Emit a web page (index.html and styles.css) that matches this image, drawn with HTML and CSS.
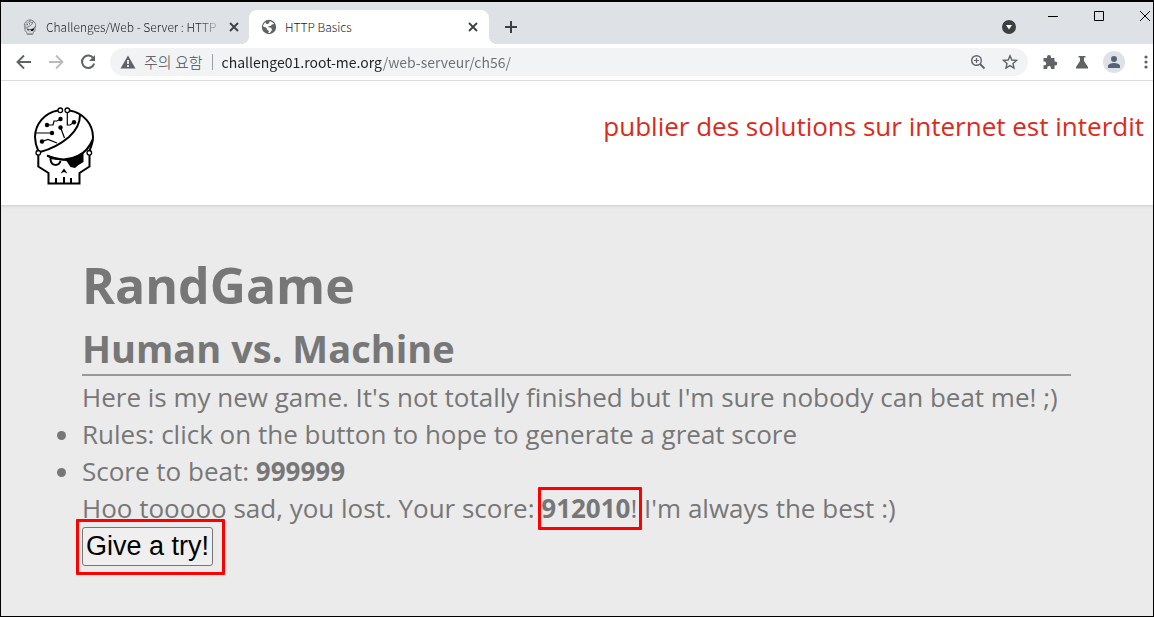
FILE: index.html
```html
<!DOCTYPE html>
<html lang="en">
<head>
<meta charset="utf-8">
<title>HTTP Basics</title>
<link rel="stylesheet" href="styles.css">
</head>
<body>
<svg class="defs" aria-hidden="true">
  <symbol id="skull" viewBox="12 10 64 82">
    <g fill="none" stroke="#000" stroke-width="2">
      <path d="M38 15.5C25 17.500 15 29 15 42C15 48 16.500 52 18.300 56"/>
      <path d="M49.500 15.500C63 17.500 73 29 73 42C73 48 71 52 69.300 56"/>
      <path d="M20 57Q36 53 49 42Q60 32 60 20"/>
      <path d="M27 60.500Q44 68 58 61Q68 56 72.500 45"/>
      <path d="M18.300 60V71.500L28.500 78V88.500H59.500V78L69.500 71.500V60"/>
      <path d="M36 83V88M44 82V88M51 83V88"/>
      <path d="M30.500 64C31 72 39 71 40.500 66"/>
      <circle cx="40.300" cy="15.300" r="2.300" stroke-width="1.300"/>
      <circle cx="47.300" cy="15.300" r="2.300" stroke-width="1.300"/>
      <circle cx="18.300" cy="57.800" r="2.300" stroke-width="1.300"/>
      <circle cx="69.300" cy="57.800" r="2.300" stroke-width="1.300"/>
      <path stroke-width="1.200" d="M27 30H33L34 26H37L40.500 24M47.300 17.500V30H50L54 27.500M40.500 32.500L44.500 43M32 38H16M22 46.500L28 44.500L37 48"/>
    </g>
    <circle cx="27" cy="30" r="2.200"/><circle cx="40.500" cy="24" r="2.200"/><circle cx="54" cy="27.300" r="2.200"/>
    <circle cx="40.500" cy="32.500" r="2.200"/><circle cx="32" cy="38" r="2.200"/><circle cx="22" cy="46.500" r="2.200"/>
    <path d="M27 60L44 65L50 64L63.500 57V67L58.500 70L55 73L50.500 72L46.500 66L30 64Z"/>
    <path d="M40.500 78.500L44 73.500L47.500 78.500L44 77Z"/>
  </symbol>
  <symbol id="close" viewBox="0 0 12 12">
    <path d="M2 2L10 10M10 2L2 10" fill="none" stroke="#3c4043" stroke-width="1.800"/>
  </symbol>
</svg>

<div class="window">
  <div class="tabstrip">
    <div class="tab">
      <svg class="favicon"><use href="#skull"/></svg>
      <span class="tab-title tab-title-faded">Challenges/Web - Server : HTTP</span>
      <button class="icon-button" aria-label="Close tab"><svg width="12" height="12"><use href="#close"/></svg></button>
    </div>
    <div class="tab tab-active">
      <svg class="globe" viewBox="0 0 16 16"><circle cx="8" cy="8" r="7.200" fill="#5f6368"/><path fill="#fff" d="M8.500 2.200C10.500 2.300 12.300 3.600 13 5L11 5.500L9.500 7H7.800L7.200 8.300L9.500 8.600L11 10L10.500 11.800L8.800 14L7.300 14L8 12L6 10.500L5.500 8.700L2.100 7.600C2.200 5.600 3.100 4.100 4.500 3.200L5 4.800L7 5L8.200 4Z"/></svg>
      <span class="tab-title">HTTP Basics</span>
      <button class="icon-button" aria-label="Close tab"><svg width="12" height="12"><use href="#close"/></svg></button>
    </div>
    <button class="icon-button new-tab" aria-label="New tab"><svg width="14" height="14" viewBox="0 0 14 14"><path d="M7 1V13M1 7H13" stroke="#3c4043" stroke-width="2"/></svg></button>
    <div class="window-tools">
      <button class="icon-button tab-search" aria-label="Search tabs"><svg width="14" height="14" viewBox="0 0 14 14"><circle cx="7" cy="7" r="7" fill="#3c4043"/><path d="M4 5H10L7 9.500Z" fill="#fff"/></svg></button>
      <button class="icon-button" aria-label="Minimize"><svg width="10" height="10" viewBox="0 0 10 10"><path d="M0 5.500H10" stroke="#000"/></svg></button>
      <button class="icon-button" aria-label="Maximize"><svg width="10" height="10" viewBox="0 0 10 10"><path d="M.5.5H9.500V9.500H.5Z" fill="none" stroke="#000"/></svg></button>
      <button class="icon-button" aria-label="Close"><svg width="10" height="10" viewBox="0 0 10 10"><path d="M0 0L10 10M10 0L0 10" stroke="#000"/></svg></button>
    </div>
  </div>

  <div class="toolbar">
    <div class="nav">
      <button class="icon-button" aria-label="Back"><svg width="16" height="16" viewBox="0 0 16 16"><path d="M15 8H2M8 1.500L1.500 8L8 14.500" fill="none" stroke="#5f6368" stroke-width="1.900"/></svg></button>
      <button class="icon-button" aria-label="Forward"><svg width="16" height="16" viewBox="0 0 16 16"><path d="M1 8H14M8 1.500L14.500 8L8 14.500" fill="none" stroke="#babcbe" stroke-width="1.900"/></svg></button>
      <button class="icon-button" aria-label="Reload"><svg width="16" height="16" viewBox="0 0 16 16"><path d="M13.500 4.500A6.200 6.200 0 1 0 14.200 9.500" fill="none" stroke="#5f6368" stroke-width="2"/><path d="M15 1V7H9Z" fill="#5f6368"/></svg></button>
    </div>
    <div class="omnibox">
      <svg width="16" height="16" viewBox="0 0 16 16"><path d="M8 1.500L15.500 14.500H.5Z" fill="#5f6368"/><path d="M8 6V10M8 11V13" stroke="#fff" stroke-width="1.600"/></svg>
      <label class="security" for="address">주의 요함</label>
      <input class="address" id="address" type="text" value="challenge01.root-me.org/web-serveur/ch56/" spellcheck="false">
      <button class="icon-button" aria-label="Zoom"><svg width="16" height="16" viewBox="0 0 16 16"><circle cx="6.500" cy="6.500" r="4.800" fill="none" stroke="#5f6368" stroke-width="1.400"/><path d="M10 10L14.500 14.500" stroke="#5f6368" stroke-width="1.800"/><path d="M6.500 4V9M4 6.500H9" stroke="#5f6368" stroke-width="1.200"/></svg></button>
      <button class="icon-button" aria-label="Bookmark"><svg width="16" height="16" viewBox="0 0 16 16"><path d="M8 1.800L9.800 6L14.500 6.400L11 9.500L12 14L8 11.600L4 14L5 9.500L1.500 6.400L6.200 6Z" fill="none" stroke="#5f6368" stroke-width="1.400"/></svg></button>
    </div>
    <div class="actions">
      <button class="icon-button" aria-label="Extensions"><svg width="16" height="16" viewBox="0 0 16 16"><path d="M1.500 4H5V3A2 2 0 0 1 9 3V4H12.500V7.500H13.300A2 2 0 0 1 13.300 11.500H12.500V15H9V14A1.900 1.900 0 0 0 5.200 14V15H1.500V11.300H2.300A1.900 1.900 0 0 0 2.300 7.500H1.500Z" fill="#5f6368"/></svg></button>
      <button class="icon-button" aria-label="Experiments"><svg width="16" height="16" viewBox="0 0 16 16"><path d="M4.500 2H11.500V3.500H10V7L14 13V14.500H2V13L6 7V3.500H4.500Z" fill="#5f6368"/></svg></button>
      <button class="icon-button profile" aria-label="Profile"><svg width="22" height="22" viewBox="0 0 22 22"><circle cx="11" cy="11" r="11" fill="#dee1e6"/><circle cx="11" cy="8" r="3" fill="#56627a"/><path d="M5 17V15C5 13 8.500 12 11 12S17 13 17 15V17Z" fill="#56627a"/></svg></button>
      <button class="icon-button" aria-label="Menu"><svg width="4" height="16" viewBox="0 0 4 16"><g fill="#5f6368"><circle cx="2" cy="3" r="1.600"/><circle cx="2" cy="8" r="1.600"/><circle cx="2" cy="13" r="1.600"/></g></svg></button>
    </div>
  </div>

  <header class="site-header">
    <svg class="logo" role="img" aria-label="Root Me"><use href="#skull"/></svg>
    <p class="notice">publier des solutions sur internet est interdit</p>
  </header>

  <main class="content">
    <h1 class="title">RandGame</h1>
    <h2 class="subtitle">Human vs. Machine</h2>
    <hr class="rule">
    <p class="line">Here is my new game. It's not totally finished but I'm sure nobody can beat me! ;)</p>
    <ul class="rules">
      <li>Rules: click on the button to hope to generate a great score</li>
      <li>Score to beat: <b>999999</b></li>
    </ul>
    <p class="line">Hoo tooooo sad, you lost. Your score: <span class="marked"><b>912010</b>!</span> I'm always the best :)</p>
    <span class="marked marked-button"><button class="try">Give a try!</button></span>
  </main>
</div>
</body>
</html>
```
FILE: styles.css
```css
* {
  box-sizing: border-box;
}

body {
  margin: 0;
  font-family: "Open Sans", "Noto Sans CJK KR", sans-serif;
}

.defs {
  position: absolute;
  width: 0;
  height: 0;
}

.window {
  display: flex;
  flex-direction: column;
  min-height: 100vh;
  border: 1px solid #000;
  border-top-width: 2px;
  background: #fff;
}

.icon-button {
  display: flex;
  flex: none;
  align-items: center;
  justify-content: center;
  padding: 0;
  border: 0;
  background: none;
}

.tabstrip {
  display: flex;
  align-items: flex-end;
  height: 42px;
  background: #dee1e6;
}

.tab {
  display: flex;
  align-items: center;
  width: 240px;
  height: 34px;
  padding: 0 10px 0 12px;
  gap: 8px;
}

.tab:first-child {
  width: 248px;
  padding: 0 9px 0 21px;
}

.tab:first-child .icon-button {
  margin-left: -6px;
}

.tab-active {
  position: relative;
  border-radius: 8px 8px 0 0;
  background: #fff;
}

.tab-active::before,
.tab-active::after {
  content: "";
  position: absolute;
  bottom: 0;
  width: 8px;
  height: 8px;
}

.tab-active::before {
  right: 100%;
  background: radial-gradient(circle at 0 0, #dee1e6 8px, #fff 8px);
}

.tab-active::after {
  left: 100%;
  background: radial-gradient(circle at 100% 0, #dee1e6 8px, #fff 8px);
}

.favicon,
.globe {
  flex: none;
  width: 16px;
  height: 16px;
}

.tab-title {
  flex: 1;
  overflow: hidden;
  white-space: nowrap;
  font-family: "Noto Sans CJK KR", sans-serif;
  font-size: 12px;
  font-weight: 300;
  line-height: 18px;
  color: #202124;
}

.tab-title-faded {
  mask-image: linear-gradient(to right, #000 84%, transparent);
}

.new-tab {
  height: 34px;
  margin-left: 15px;
}

.window-tools {
  display: flex;
  align-self: flex-start;
  gap: 36px;
  margin-left: auto;
  padding: 9px 3px 0 0;
}

.window-tools .icon-button {
  height: 10px;
}

.window-tools .tab-search {
  height: 32px;
  margin-right: -4px;
}

.toolbar {
  display: flex;
  align-items: center;
  height: 37px;
  padding: 0 5px 0 15px;
  gap: 14px;
  border-bottom: 1px solid #dadce0;
}

.nav {
  display: flex;
  gap: 16px;
}

.omnibox {
  display: flex;
  flex: 1;
  align-items: center;
  height: 28px;
  padding: 0 10px;
  gap: 8px;
  border-radius: 14px;
  background: #f1f3f4;
}

.omnibox .icon-button {
  margin-left: 8px;
}

.security {
  padding-right: 9px;
  border-right: 1px solid #9aa0a6;
  font-family: "Noto Sans CJK KR", sans-serif;
  font-size: 15px;
  font-weight: 300;
  line-height: 16px;
  color: #45494d;
}

.address {
  flex: 1;
  min-width: 0;
  height: 24px;
  padding: 0 0 0 1px;
  border: 0;
  outline: 0;
  font-family: "Noto Sans CJK KR", sans-serif;
  font-size: 14px;
  color: transparent;
  background: linear-gradient(to right, #202124 161px, #6b6f74 161px);
  background-clip: text;
}

.actions {
  display: flex;
  align-items: center;
  gap: 16px;
}

.profile {
  margin: 0 3px 0 -3px;
}

.site-header {
  display: flex;
  align-items: flex-start;
  justify-content: space-between;
  height: 124px;
  padding: 24px 9px 0 31px;
}

.logo {
  flex: none;
  width: 64px;
  height: 82px;
}

.notice {
  margin: 3px 0 0;
  font-size: 26px;
  line-height: 36px;
  color: #dc2a1c;
}

.content {
  flex: 1;
  padding: 48px 82px 40px 81px;
  font-size: 26px;
  line-height: 37px;
  color: #777;
  background: #ebebeb;
  box-shadow: inset 0 3px 3px -2px #ccc;
}

.title {
  margin: 0 0 6px;
  font-size: 50px;
  line-height: 64px;
}

.subtitle {
  margin: 0;
  font-size: 38px;
  line-height: 51px;
}

.rule {
  margin: 0 0 3px;
  border: 1px solid #999;
}

.line {
  margin: 0;
}

.rules {
  margin: 0;
  padding: 0;
}

.marked {
  position: relative;
}

.marked::after {
  content: "";
  position: absolute;
  inset: -3px -5px -4px -3px;
  border: 3px solid #f00;
  border-radius: 1px;
  pointer-events: none;
}

.marked-button {
  display: inline-block;
}

.marked-button::after {
  inset: -8px -12px -9px -6px;
}

.try {
  display: block;
  height: 39px;
  padding: 0 3px;
  border: 1px solid #767676;
  border-radius: 3px;
  font-family: "Liberation Sans", Arial, sans-serif;
  font-size: 27px;
  color: #000;
  background: #efefef;
}
```
